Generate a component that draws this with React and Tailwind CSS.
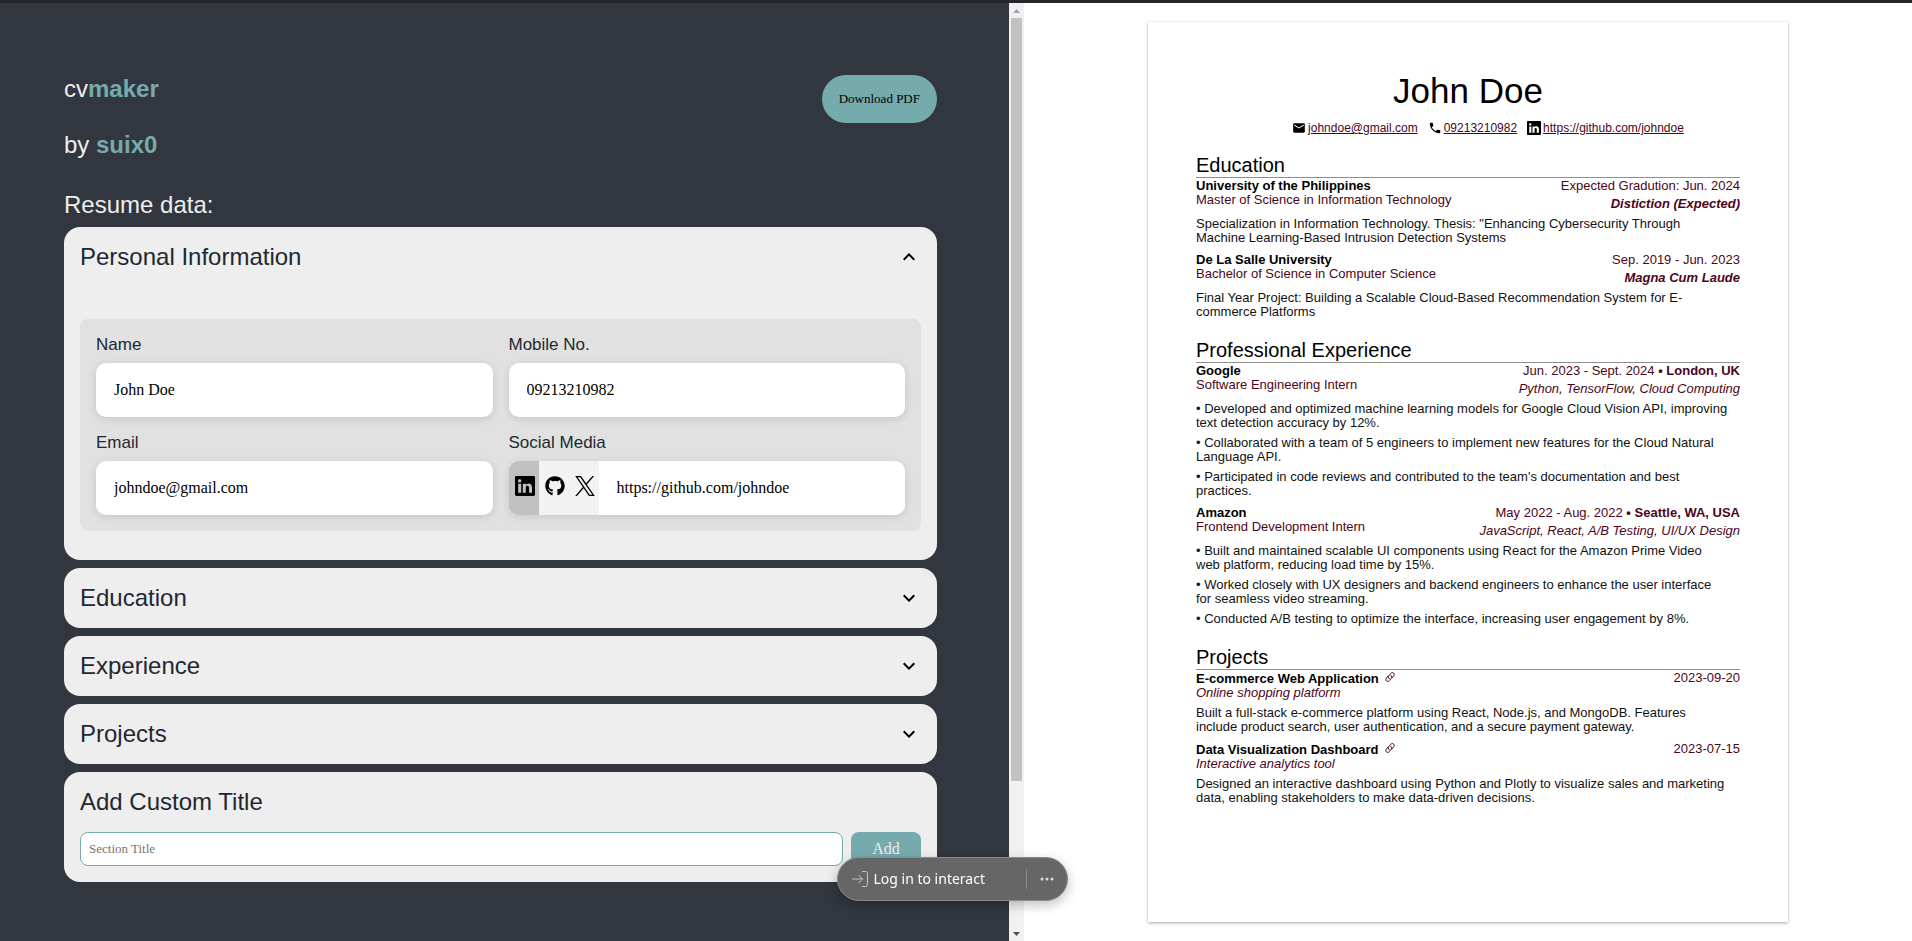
import { useState } from 'react'
import { BsLinkedin, BsThreeDots } from 'react-icons/bs'
import { FaGithub } from 'react-icons/fa'
import { MdEmail, MdPhone, MdKeyboardArrowDown, MdKeyboardArrowUp } from 'react-icons/md'

const person = {
  name: 'John Doe',
  phone: '09213210982',
  email: 'johndoe@gmail.com',
  social: 'https://github.com/johndoe',
}

const education = [
  {
    school: 'University of the Philippines',
    degree: 'Master of Science in Information Technology',
    date: 'Expected Gradution: Jun. 2024',
    award: 'Distiction (Expected)',
    text: 'Specialization in Information Technology. Thesis: "Enhancing Cybersecurity Through\nMachine Learning-Based Intrusion Detection Systems',
  },
  {
    school: 'De La Salle University',
    degree: 'Bachelor of Science in Computer Science',
    date: 'Sep. 2019 - Jun. 2023',
    award: 'Magna Cum Laude',
    text: 'Final Year Project: Building a Scalable Cloud-Based Recommendation System for E-commerce Platforms',
  },
]

const experience = [
  {
    company: 'Google',
    role: 'Software Engineering Intern',
    date: 'Jun. 2023 - Sept. 2024',
    place: 'London, UK',
    tech: 'Python, TensorFlow, Cloud Computing',
    bullets: [
      'Developed and optimized machine learning models for Google Cloud Vision API, improving\ntext detection accuracy by 12%.',
      'Collaborated with a team of 5 engineers to implement new features for the Cloud Natural\nLanguage API.',
      "Participated in code reviews and contributed to the team's documentation and best\npractices.",
    ],
  },
  {
    company: 'Amazon',
    role: 'Frontend Development Intern',
    date: 'May 2022 - Aug. 2022',
    place: 'Seattle, WA, USA',
    tech: 'JavaScript, React, A/B Testing, UI/UX Design',
    bullets: [
      'Built and maintained scalable UI components using React for the Amazon Prime Video\nweb platform, reducing load time by 15%.',
      'Worked closely with UX designers and backend engineers to enhance the user interface\nfor seamless video streaming.',
      'Conducted A/B testing to optimize the interface, increasing user engagement by 8%.',
    ],
  },
]

const projects = [
  {
    title: 'E-commerce Web Application',
    kind: 'Online shopping platform',
    date: '2023-09-20',
    text: 'Built a full-stack e-commerce platform using React, Node.js, and MongoDB. Features\ninclude product search, user authentication, and a secure payment gateway.',
  },
  {
    title: 'Data Visualization Dashboard',
    kind: 'Interactive analytics tool',
    date: '2023-07-15',
    text: 'Designed an interactive dashboard using Python and Plotly to visualize sales and marketing\ndata, enabling stakeholders to make data-driven decisions.',
  },
]

function XLogo() {
  return (
    <svg viewBox="0 0 1200 1227" className="size-5" fill="currentColor" aria-hidden="true">
      <path d="M714.163 519.284L1160.89 0H1055.03L667.137 450.887L357.328 0H0L468.492 681.821L0 1226.37H105.866L515.491 750.218L842.672 1226.37H1200L714.137 519.284H714.163ZM569.165 687.828L521.697 619.934L144.011 79.6944H306.615L611.412 515.685L658.88 583.579L1055.08 1150.3H892.476L569.165 687.854V687.828Z" />
    </svg>
  )
}

function ChainIcon() {
  return (
    <svg viewBox="0 0 24 24" className="size-2.5" fill="none" stroke="currentColor" strokeWidth="2.4" strokeLinecap="round" aria-hidden="true">
      <path d="M10 16c-2.500-2-2.500-5-.5-7.500l4-5c2-2.500 5-2.800 7-1.200 2 1.700 2 4.700 0 7.200L17 14" />
      <path d="M14 8c2.500 2 2.500 5 .5 7.500l-4 5c-2 2.500-5 2.800-7 1.200-2-1.700-2-4.700 0-7.200L7 10" />
    </svg>
  )
}

function LoginIcon() {
  return (
    <svg viewBox="0 0 16 16" className="size-4" fill="none" stroke="currentColor" strokeWidth="1" aria-hidden="true">
      <path d="M0 8h10.500M6.500 4l4 4-4 4M10 .5h3.500a2 2 0 0 1 2 2v11a2 2 0 0 1-2 2H10" />
    </svg>
  )
}

const fieldClass = 'h-[54px] w-full min-w-0 bg-white px-[18px] font-[Liberation_Serif,serif] text-base text-black outline-none'

function Field({ id, label, value }) {
  return (
    <div className="flex flex-col gap-2">
      <label htmlFor={id} className="text-[17px] leading-5">{label}</label>
      <input id={id} defaultValue={value} className={`${fieldClass} rounded-[10px] shadow-[0_2px_8px_rgba(0,0,0,0.12)]`} />
    </div>
  )
}

const networks = [
  { name: 'LinkedIn', icon: <BsLinkedin className="size-5" /> },
  { name: 'GitHub', icon: <FaGithub className="size-5" /> },
  { name: 'X', icon: <XLogo /> },
]

function SocialField() {
  const [active, setActive] = useState('LinkedIn')
  return (
    <div className="flex flex-col gap-2">
      <label htmlFor="social" className="text-[17px] leading-5">Social Media</label>
      <div className="flex overflow-hidden rounded-[10px] shadow-[0_2px_8px_rgba(0,0,0,0.12)]">
        {networks.map((n) => (
          <button
            key={n.name}
            type="button"
            aria-label={n.name}
            onClick={() => setActive(n.name)}
            className={`flex h-[54px] shrink-0 items-center pr-1 pb-1 pl-1.5 text-black ${active === n.name ? 'bg-[#c0c0c0]' : 'bg-[#f2f2f2]'}`}
          >
            {n.icon}
          </button>
        ))}
        <input id="social" defaultValue={person.social} className={fieldClass} />
      </div>
    </div>
  )
}

function Section({ title, open = false, children }) {
  const [expanded, setExpanded] = useState(open)
  const Arrow = expanded ? MdKeyboardArrowUp : MdKeyboardArrowDown
  return (
    <section className="rounded-2xl bg-[#eeeeee] p-4">
      <button type="button" aria-expanded={expanded} onClick={() => setExpanded(!expanded)} className="flex w-full items-center justify-between text-2xl leading-7">
        {title}
        <Arrow className="size-6 text-black" />
      </button>
      {expanded && children}
    </section>
  )
}

function Scrollbar() {
  return (
    <div aria-hidden="true" className="flex w-[15px] shrink-0 flex-col items-center bg-[#f1f1f1]">
      <div className="flex h-[15px] items-center">
        <svg viewBox="0 0 7 4" className="h-1 w-[7px]"><path d="M0 4L3.500 0L7 4Z" fill="#a3a3a3" /></svg>
      </div>
      <div className="flex w-[11px] flex-1 flex-col">
        <div className="h-[84%] bg-[#c1c1c1]" />
      </div>
      <div className="flex h-[15px] items-center">
        <svg viewBox="0 0 7 4" className="h-1 w-[7px]"><path d="M0 0L3.500 4L7 0Z" fill="#505050" /></svg>
      </div>
    </div>
  )
}

function Editor() {
  return (
    <div className="min-w-0 flex-1 bg-[#31363f] pt-[72px] pr-[72px] pb-14 pl-16 text-[#222831]">
      <header className="flex items-start justify-between">
        <div className="flex flex-col gap-7 text-2xl leading-7 text-[#eeeeee]">
          <h1>cv<span className="font-bold text-[#76abae]">maker</span></h1>
          <p>by <a href="#suix0" className="font-bold text-[#76abae]">suix0</a></p>
        </div>
        <button type="button" className="h-12 rounded-3xl bg-[#76abae] px-[17px] font-[Liberation_Serif,serif] text-[13px] text-black">
          Download PDF
        </button>
      </header>
      <h2 className="mt-8 mb-2 text-2xl leading-7 text-[#eeeeee]">Resume data:</h2>
      <main className="flex flex-col gap-2">
        <Section title="Personal Information" open>
          <div className="mt-12 mb-[13px] grid grid-cols-2 gap-4 rounded-lg bg-[#e1e1e1] p-4">
            <Field id="name" label="Name" value={person.name} />
            <Field id="mobile" label="Mobile No." value={person.phone} />
            <Field id="email" label="Email" value={person.email} />
            <SocialField />
          </div>
        </Section>
        <Section title="Education" />
        <Section title="Experience" />
        <Section title="Projects" />
        <section className="rounded-2xl bg-[#eeeeee] p-4">
          <label htmlFor="custom" className="block text-2xl leading-7">Add Custom Title</label>
          <div className="mt-4 flex gap-2 font-[Liberation_Serif,serif]">
            <input
              id="custom"
              placeholder="Section Title"
              className="h-[34px] min-w-0 flex-1 rounded-lg border border-[#76abae] bg-white px-2 text-[13px] text-black outline-none placeholder:text-[#757575]"
            />
            <button type="button" className="flex h-[34px] w-[70px] items-center justify-center rounded-lg bg-[#76abae] text-base text-[#eeeeee]">Add</button>
          </div>
        </section>
      </main>
    </div>
  )
}

function ResumeSection({ title, children }) {
  return (
    <section>
      <h3 className="mb-px border-b border-[#8f8f8f] text-xl leading-6 text-black">{title}</h3>
      <div className="flex flex-col gap-2">{children}</div>
    </section>
  )
}

function Resume() {
  return (
    <article className="min-h-[900px] w-[640px] bg-white p-12 text-[13px] leading-[14px] text-[#111111] shadow-[0_1px_3px_rgba(0,0,0,0.35)]">
      <h2 className="text-center text-[35px] leading-[42px] text-black">{person.name}</h2>
      <ul className="mt-1.5 flex h-5 items-center justify-center gap-2.5 pl-10 text-xs text-[#4c0519]">
        <li className="flex items-center gap-0.5">
          <MdEmail className="size-3.5 text-black" />
          <a href="#email" className="underline">{person.email}</a>
        </li>
        <li className="flex items-center gap-0.5">
          <MdPhone className="size-3.5 text-black" />
          <a href="#phone" className="underline">{person.phone}</a>
        </li>
        <li className="flex items-center gap-0.5">
          <BsLinkedin className="size-3.5 text-black" />
          <a href="#social" className="underline">{person.social}</a>
        </li>
      </ul>
      <div className="mt-[15px] flex flex-col gap-[19px]">
        <ResumeSection title="Education">
          {education.map((e) => (
            <div key={e.school} className="flex flex-col gap-1.5">
              <div className="flex justify-between text-[#4c0519]">
                <div>
                  <p className="font-bold text-black">{e.school}</p>
                  <p>{e.degree}</p>
                </div>
                <div className="flex flex-col gap-1 text-right">
                  <p>{e.date}</p>
                  <p className="font-bold italic">{e.award}</p>
                </div>
              </div>
              <p className="whitespace-pre-line">{e.text}</p>
            </div>
          ))}
        </ResumeSection>
        <ResumeSection title="Professional Experience">
          {experience.map((e) => (
            <div key={e.company} className="flex flex-col gap-1.5">
              <div className="flex justify-between text-[#4c0519]">
                <div>
                  <p className="font-bold text-black">{e.company}</p>
                  <p>{e.role}</p>
                </div>
                <div className="flex flex-col gap-1 text-right">
                  <p>{e.date} <span className="font-bold">{`• ${e.place}`}</span></p>
                  <p className="italic">{e.tech}</p>
                </div>
              </div>
              {e.bullets.map((b) => (
                <p key={b} className="whitespace-pre-line">{`• ${b}`}</p>
              ))}
            </div>
          ))}
        </ResumeSection>
        <ResumeSection title="Projects">
          {projects.map((p) => (
            <div key={p.title} className="flex flex-col gap-1.5">
              <div className="flex justify-between text-[#4c0519]">
                <div>
                  <p className="flex gap-1.5 pt-px font-bold text-black">
                    {p.title}
                    <a href="#project" aria-label={p.title} className="text-[#4c0519]"><ChainIcon /></a>
                  </p>
                  <p className="italic">{p.kind}</p>
                </div>
                <p>{p.date}</p>
              </div>
              <p className="whitespace-pre-line">{p.text}</p>
            </div>
          ))}
        </ResumeSection>
      </div>
    </article>
  )
}

function LoginPill() {
  return (
    <div className="pointer-events-none fixed inset-x-0 bottom-10 flex justify-center pr-2">
      <div className="pointer-events-auto flex h-11 w-[231px] items-center rounded-full border border-[#8a8a8a] bg-[#666666] pl-3.5 text-white shadow-[0_4px_12px_rgba(0,0,0,0.25)]">
        <button type="button" className="flex flex-1 items-center gap-1.5 font-[Noto_Sans,sans-serif] text-sm">
          <span className="text-[#c4c4c4]"><LoginIcon /></span>
          Log in to interact
        </button>
        <button type="button" aria-label="More" className="flex h-5 w-[41px] items-center border-l border-[#8a8a8a] pl-3">
          <BsThreeDots className="size-4 text-[#dddddd]" />
        </button>
      </div>
    </div>
  )
}

export default function App() {
  return (
    <div className="flex min-h-screen border-t-[3px] border-[#27262b] bg-white font-[Liberation_Sans,Arial,sans-serif]">
      <div className="flex min-w-0 flex-[1024]">
        <Editor />
        <Scrollbar />
      </div>
      <div className="flex min-w-0 flex-[888] items-start justify-center pt-[19px]">
        <Resume />
      </div>
      <LoginPill />
    </div>
  )
}
